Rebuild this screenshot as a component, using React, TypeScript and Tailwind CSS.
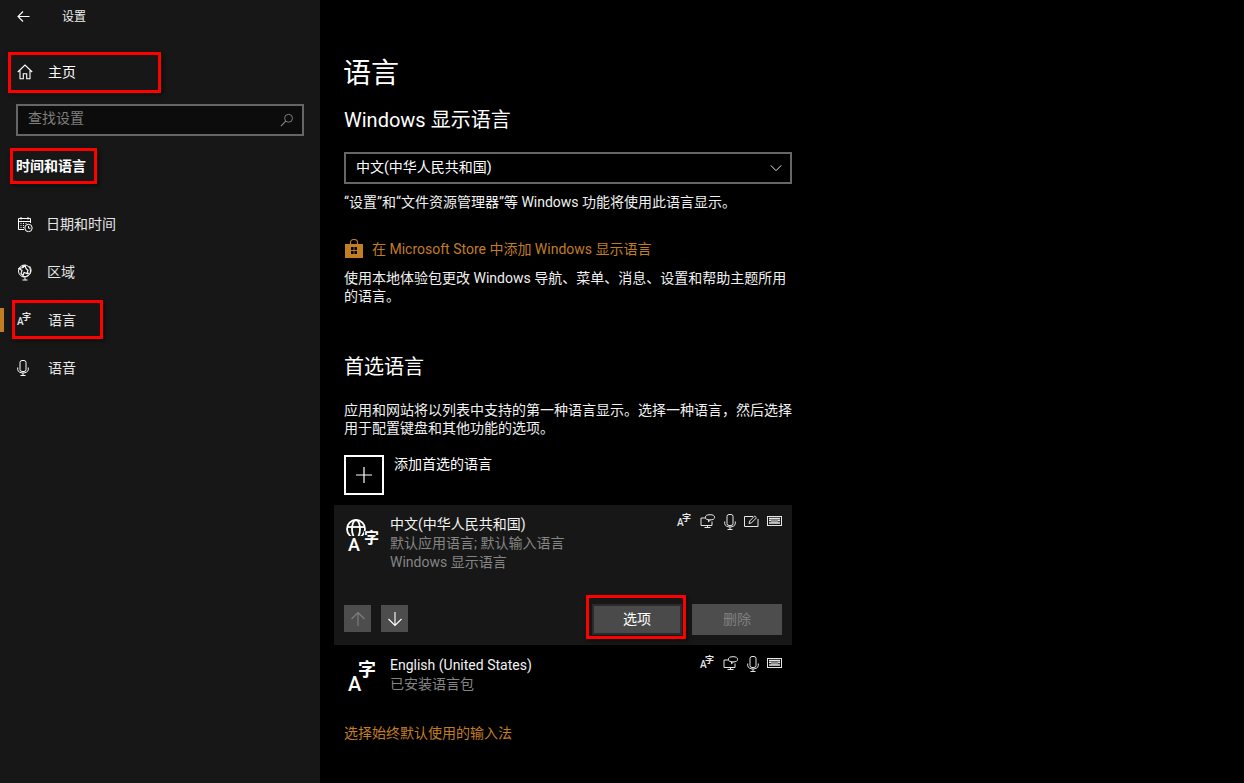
import React from "react";

const FONT = 'Roboto,"Noto Sans CJK SC",sans-serif';

function Svg({ size = 16, children, className = "" }: { size?: number; children: React.ReactNode; className?: string }) {
  return (
    <svg width={size} height={size} viewBox="0 0 16 16" fill="none" stroke="currentColor" strokeWidth={1} className={`shrink-0 ${className}`}>
      {children}
    </svg>
  );
}

const Back = () => (
  <Svg size={16}>
    <path d="M13.5 7.5H2M7 2.5L2 7.5l5 5" strokeWidth={1.1} />
  </Svg>
);
const Home = () => (
  <Svg size={16}>
    <path d="M.8 8L8 1l7.2 7M3 6.5v8.2h3.3v-5h3.4v5H13V6.5" strokeWidth={1.1} />
  </Svg>
);
const Search = () => (
  <Svg size={14}>
    <circle cx="9.8" cy="6" r="4.5" />
    <path d="M6.6 9.4L1 15" strokeWidth={1.2} />
  </Svg>
);
const Calendar = () => (
  <svg width="16" height="17" viewBox="0 0 16 17" fill="none" stroke="currentColor" className="shrink-0">
    <path d="M7 13.5H1.500V2.500h12V7M4 1v2.500M11 1v2.500M1.500 5.500h12" />
    <path d="M3.500 7.500h1M6 7.500h1M8.500 7.500h1M3.500 9.500h1M6 9.500h1M3.500 11.500h1M6 11.500h1" />
    <circle cx="11.500" cy="12" r="3.700" />
    <path d="M11.500 10v2.200h2" />
  </svg>
);
const Globe = () => (
  <svg width="16" height="17" viewBox="0 0 16 17" fill="none" stroke="currentColor" className="shrink-0">
    <circle cx="7.500" cy="7" r="6" />
    <path d="M2 4.500l3 2-1 3 2 2 1-3 3 1 1-3-2-2-1-3-2 2zM10 10l2-1M7 1.500l-2 2" strokeWidth={1.1} />
    <path d="M12.500 2c2.500 3.200 1.800 7.200-1 9.200-2 1.500-4 1.700-6 1.200M8 13.500v2.500M5.500 16h5" />
  </svg>
);
const Mic = ({ h = 16, w = 12 }: { h?: number; w?: number }) => (
  <svg width={w} height={h} viewBox="0 0 12 16" fill="none" stroke="currentColor" className="shrink-0">
    <rect x="3" y="0.500" width="6" height="11" rx="2" />
    <path d="M.7 7.500v2a5.300 3.500 0 0 0 10.600 0v-2M6 13v2.500M3.500 15.500h5" />
  </svg>
);
const Bag = () => (
  <svg width="20" height="20" viewBox="0 0 20 20" className="shrink-0">
    <path d="M6.500 5V3.500a3.500 3 0 0 1 7 0V5" fill="none" stroke="#c27e24" strokeWidth="1.200" />
    <path d="M1 5h18v14H1z" fill="#c27e24" />
    <path d="M7 8h2.600v3H7zM10.400 8H13v3h-2.600zM7 12h2.600v3H7zM10.400 12H13v3h-2.600z" fill="#000" />
  </svg>
);
const Chev = () => (
  <Svg size={12}>
    <path d="M1 4.500l7 7 7-7" strokeWidth={1.2} />
  </Svg>
);
const Plus = () => (
  <svg width="16" height="16" viewBox="0 0 16 16" stroke="currentColor" className="shrink-0">
    <path d="M8 0v16M0 8h16" strokeWidth="1.200" />
  </svg>
);
const Arrow = ({ up }: { up?: boolean }) => (
  <svg width="16" height="16" viewBox="0 0 16 16" fill="none" stroke="currentColor" className={up ? "rotate-180" : ""}>
    <path d="M8 1v13.500M1.500 8L8 14.500 14.500 8" strokeWidth="1.100" />
  </svg>
);

function SmallLang() {
  return (
    <span className="relative inline-block h-[15px] w-[15px] shrink-0 text-[#e6e6e6]">
      <span className="absolute right-[1px] top-0 text-[9px] font-bold leading-none">字</span>
      <span className="absolute bottom-[1px] left-0 text-[10px] font-medium leading-none">A</span>
    </span>
  );
}

function BigLang({ globe }: { globe?: boolean }) {
  return (
    <span className="relative h-[36px] w-[46px] shrink-0">
      {globe && (
        <svg width="20" height="17" viewBox="0 0 20 17" fill="none" stroke="white" strokeWidth="1.800" className="absolute left-[2px] top-0">
          <circle cx="10" cy="10" r="9" />
          <ellipse cx="10" cy="10" rx="4" ry="9" />
          <path d="M1 8h18" />
        </svg>
      )}
      {globe ? (
        <>
          <span className="absolute left-[20px] top-[12px] bg-[#171717] text-[15px] font-bold leading-none">字</span>
          <span className="absolute left-[4px] top-[17px] text-[18px] font-medium leading-none">A</span>
        </>
      ) : (
        <>
          <span className="absolute left-[14px] top-0 text-[18px] font-bold leading-none">字</span>
          <span className="absolute left-[4px] top-[13px] text-[20px] font-medium leading-none">A</span>
        </>
      )}
    </span>
  );
}

const Display = () => (
  <svg width="16" height="15" viewBox="0 0 16 15" fill="none" stroke="currentColor" className="shrink-0">
    <path d="M6 4H1v7.500h11V7.500M4.500 13.500h6M7.500 11.500v2" />
    <ellipse cx="10" cy="3.300" rx="4.600" ry="2.600" />
    <path d="M8.500 5.800v2l2-1.800" />
  </svg>
);
const Pen = () => (
  <svg width="15" height="12" viewBox="0 0 15 12" fill="none" stroke="currentColor" className="mt-[1px] shrink-0">
    <path d="M9 1.500H.5v10h13.500V4" />
    <path d="M5 8.500l.7-2.500 5-5 1.800 1.800-5 5z" />
  </svg>
);
const Keyboard = () => (
  <svg width="15" height="10" viewBox="0 0 15 10" className="mt-[2px] shrink-0" fill="none" stroke="currentColor">
    <rect x=".5" y=".5" width="14" height="9" />
    <path d="M2 2.500h11M2 4.500h2M11 4.500h2M2 7h11" strokeWidth="1.400" />
    <rect x="4" y="3.500" width="7" height="3" fill="currentColor" stroke="none" opacity=".6" />
  </svg>
);

function NavRow({ icon, label, active, shift = "" }: { icon: React.ReactNode; label: string; active?: boolean; shift?: string }) {
  return (
    <div className="relative flex h-12 items-center pl-[17px] text-[14px] text-[#e6e6e6]">
      {active && <span className="absolute left-0 top-3 h-6 w-1 bg-[#c27e24]" />}
      <span className="flex w-[31px] text-white">{icon}</span>
      <span className={shift}>{label}</span>
    </div>
  );
}

function RedBox({ className }: { className: string }) {
  return <span className={`pointer-events-none absolute border-[3px] border-[#ff0000] shadow-[2px_2px_4px_rgba(0,0,0,0.5)] ${className}`} />;
}

export default function App() {
  return (
    <div className="relative flex h-[783px] w-[1244px] overflow-hidden bg-black text-white" style={{ fontFamily: FONT }}>
      <aside className="flex w-[320px] shrink-0 flex-col bg-[#171717]">
        <div className="flex h-8 items-center pl-4 pt-[1px] text-[12px]">
          <span className="w-[46px]"><Back /></span>
          <span className="text-[#eeeeee]">设置</span>
        </div>
        <div className="mt-[20px] flex h-10 items-center pl-[17px] text-[14px]">
          <span className="w-[31px]"><Home /></span>
          <span>主页</span>
        </div>
        <div className="mx-4 mt-3 flex h-8 items-center justify-between border-2 border-[#666666] bg-[#0c0c0c] pl-2.5 pr-2 text-[14px] text-[#7f7f7f]">
          <span className="mb-1">查找设置</span>
          <span className="text-[#8a8a8a]"><Search /></span>
        </div>
        <div className="mt-5 pl-4 text-[14px] font-bold leading-5">时间和语言</div>
        <div className="mt-[24px] flex flex-col">
          <NavRow icon={<Calendar />} label="日期和时间" shift="-ml-[2px]" />
          <NavRow icon={<Globe />} label="区域" shift="-ml-[1px]" />
          <NavRow icon={<SmallLang />} label="语言" active />
          <NavRow icon={<Mic />} label="语音" />
        </div>
      </aside>

      <main className="flex w-[472px] flex-col pl-[14px]">
        <div className="pl-[10px]">
          <h1 className="mt-[54px] -ml-[1px] text-[28px] leading-10 font-normal">语言</h1>
          <h2 className="mt-[12px] text-[20px] leading-7 font-normal">Windows 显示语言</h2>
          <div className="mt-[18px] flex h-8 items-center justify-between border-2 border-[#666666] pl-2.5 pr-[8px] text-[14px]">
            <span className="mb-[2px]">中文(中华人民共和国)</span>
            <Chev />
          </div>
          <p className="mt-[9px] text-[14px] leading-[18px] text-[#f0f0f0]">“设置”和“文件资源管理器”等 Windows 功能将使用此语言显示。</p>
          <div className="mt-[28px] flex h-5 items-center gap-2 text-[14px] text-[#c27e24]">
            <Bag />
            <span>在 Microsoft Store 中添加 Windows 显示语言</span>
          </div>
          <p className="mt-[10px] text-[14px] leading-[18px] text-[#f0f0f0]">使用本地体验包更改 Windows 导航、菜单、消息、设置和帮助主题所用的语言。</p>
          <h2 className="mt-[48px] text-[20px] leading-7 font-normal">首选语言</h2>
          <p className="mt-5 text-[14px] leading-[18px] text-[#f0f0f0]">应用和网站将以列表中支持的第一种语言显示。选择一种语言，然后选择用于配置键盘和其他功能的选项。</p>
          <div className="mt-[18px] flex items-start gap-[10px] text-[14px]">
            <span className="flex h-10 w-10 items-center justify-center border-2 border-white"><Plus /></span>
            <span className="leading-[18px]">添加首选的语言</span>
          </div>
        </div>

        <section className="mt-[10px] flex h-[140px] flex-col bg-[#171717] px-[10px]">
          <div className="flex pt-[9px]">
            <span className="mt-[5px] flex"><BigLang globe /></span>
            <div className="flex-1 pt-[1px] text-[14px] leading-[19px]">
              <div className="text-[#f2f2f2]">中文(中华人民共和国)</div>
              <div className="text-[#858585]">默认应用语言; 默认输入语言</div>
              <div className="text-[#858585]">Windows 显示语言</div>
            </div>
            <div className="flex items-start gap-[8px] text-[#e6e6e6]">
              <SmallLang />
              <Display />
              <Mic h={16} w={12} />
              <Pen />
              <Keyboard />
            </div>
          </div>
          <div className="mt-auto mb-[10px] flex items-start">
            <span className="mt-[1px] flex h-[27px] w-[27px] items-center justify-center bg-[#4d4d4d] text-[#808080]"><Arrow up /></span>
            <span className="ml-[10px] mt-[1px] flex h-[27px] w-[27px] items-center justify-center bg-[#4d4d4d] text-white"><Arrow /></span>
            <span className="ml-auto flex h-[31px] w-[90px] items-center justify-center border-2 border-[#2b2b2b] bg-[#4a4a4a] text-[14px]">选项</span>
            <span className="ml-[10px] flex h-[31px] w-[90px] items-center justify-center bg-[#4d4d4d] text-[14px] text-[#808080]">删除</span>
          </div>
        </section>

        <section className="flex h-[60px] px-[10px] pt-[11px]">
          <span className="mt-[5px] flex"><BigLang /></span>
          <div className="flex-1 text-[14px] leading-[19px]">
            <div className="text-[#f2f2f2]">English (United States)</div>
            <div className="text-[#858585]">已安装语言包</div>
          </div>
          <div className="flex items-start gap-[8px] text-[#e6e6e6]">
            <SmallLang />
            <Display />
            <Mic h={16} w={12} />
            <Keyboard />
          </div>
        </section>

        <div className="mt-[18px] pl-[10px] text-[14px] leading-5 text-[#c27e24]">选择始终默认使用的输入法</div>
      </main>

      <RedBox className="left-[8px] top-[52px] h-[41px] w-[153px]" />
      <RedBox className="left-[10px] top-[148px] h-[36px] w-[87px]" />
      <RedBox className="left-[12px] top-[300px] h-[39px] w-[91px]" />
      <RedBox className="left-[586px] top-[595px] h-[44px] w-[100px]" />
    </div>
  );
}
